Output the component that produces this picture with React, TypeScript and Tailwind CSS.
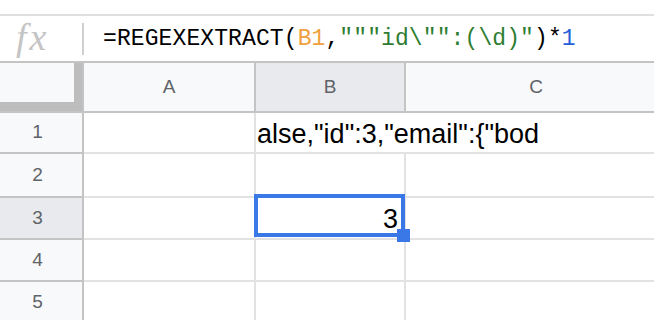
import React from 'react'

const mono = { fontFamily: '"Liberation Mono", "DejaVu Sans Mono", monospace' }

function FormulaBar() {
  return (
    <div className="flex h-[47px] items-center border-b-2 border-[#c4c4c4] bg-white">
      <div className="flex w-[82px] shrink-0 items-center">
        <span className="ml-[16px] mt-[-4px] font-['Liberation_Serif',serif] text-[38px] italic leading-none tracking-[3px] text-[#c4c4c4]">
          fx
        </span>
      </div>
      <div className="h-[32px] w-[2px] bg-[#d0d0d0]" />
      <div
        className="ml-[19px] mt-[1px] whitespace-nowrap text-[23px] leading-none tracking-[0.1px] text-black"
        style={mono}
      >
        =REGEXEXTRACT(
        <span className="text-[#f0a03c]">B1</span>,
        <span className="text-[#2e7d32]">"""id\"":(\d)"</span>)*
        <span className="text-[#2360d8]">1</span>
      </div>
    </div>
  )
}

function ColumnHeaders() {
  return (
    <div className="flex h-[50px] border-b-2 border-[#c4c4c4] text-[19px] text-[#5f6368]">
      <div className="h-full w-[84px] shrink-0 border-r-2 border-[#c4c4c4] bg-[#bdbdbd]">
        <div className="h-[39px] w-[74px] bg-[#f8f9fa]" />
      </div>
      <div className="flex w-[172px] shrink-0 items-center justify-center border-r-2 border-[#c4c4c4] bg-[#f8f9fa]">A</div>
      <div className="flex w-[150px] shrink-0 items-center justify-center border-r-2 border-[#c4c4c4] bg-[#e8eaed]">B</div>
      <div className="flex w-[262px] shrink-0 items-center justify-center border-r-2 border-[#c4c4c4] bg-[#f8f9fa]">C</div>
    </div>
  )
}

interface RowProps {
  readonly num: number
  readonly height: string
  readonly active?: boolean
  readonly children?: React.ReactNode
}

function Row({ num, height, active, children }: RowProps) {
  return (
    <div className={`flex shrink-0 ${height}`}>
      <div
        className={`flex w-[84px] shrink-0 items-center justify-center border-r-2 border-b-2 border-[#c4c4c4] pr-[7px] text-[19px] text-[#5f6368] ${
          active ? 'bg-[#e8eaed]' : 'bg-[#f8f9fa]'
        }`}
      >
        {num}
      </div>
      {children ?? (
        <>
          <div className="w-[172px] shrink-0 border-r-2 border-b-2 border-[#e2e2e2]" />
          <div className="w-[150px] shrink-0 border-r-2 border-b-2 border-[#e2e2e2]" />
          <div className="w-[262px] shrink-0 border-b-2 border-[#e2e2e2]" />
        </>
      )}
    </div>
  )
}

export default function App() {
  return (
    <div className="relative h-[320px] w-[654px] overflow-hidden bg-white font-['Liberation_Sans',Arial,sans-serif]">
      <div className="h-[16px] border-b-2 border-[#e0e0e0]" />
      <FormulaBar />
      <ColumnHeaders />

      <Row num={1} height="h-[41px]">
        <div className="w-[172px] shrink-0 border-r-2 border-b-2 border-[#e2e2e2]" />
        <div className="flex w-[412px] shrink-0 border-b-2 border-[#e2e2e2] pl-px pt-[6px]">
          <span className="whitespace-nowrap text-[27px] leading-[31px] text-black">alse,"id":3,"email":{'{'}"bod</span>
        </div>
      </Row>
      <Row num={2} height="h-[44px]" />
      <Row num={3} height="h-[42px]" active>
        <div className="w-[172px] shrink-0 border-r-2 border-b-2 border-[#e2e2e2]" />
        <div className="w-[150px] shrink-0 border-r-2 border-b-2 border-[#e2e2e2] pr-[6px] pt-[6px] text-right text-[27px] leading-[31px] text-black">
          3
        </div>
        <div className="w-[262px] shrink-0 border-b-2 border-[#e2e2e2]" />
      </Row>
      <Row num={4} height="h-[42px]" />
      <Row num={5} height="h-[42px]" />

      {/* selection on B3 */}
      <div className="absolute left-[254px] top-[194px] h-[43px] w-[151px] border-4 border-[#3b78e7]" />
      <div className="absolute left-[397px] top-[229px] h-[13px] w-[13px] bg-[#3b78e7]" />
    </div>
  )
}
